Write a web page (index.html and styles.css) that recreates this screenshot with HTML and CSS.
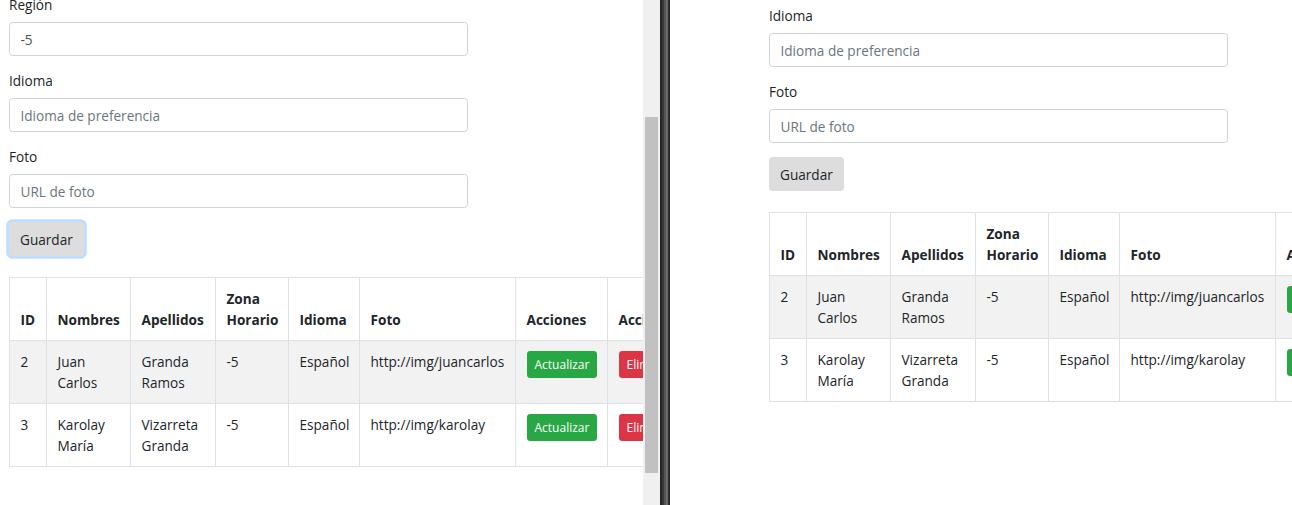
FILE: index.html
```html
<!DOCTYPE html>
<html lang="es">
<head>
<meta charset="utf-8">
<title>Usuarios</title>
<link rel="stylesheet" href="styles.css">
</head>
<body>
<div class="screen">
  <div class="pane pane-left">
    <div class="viewport">
      <div class="page page-left">
        <div class="form-group">
          <label class="label">Región</label>
          <input class="input" type="text" value="-5">
        </div>
        <div class="form-group">
          <label class="label">Idioma</label>
          <input class="input" type="text" placeholder="Idioma de preferencia">
        </div>
        <div class="form-group">
          <label class="label">Foto</label>
          <input class="input" type="text" placeholder="URL de foto">
        </div>
        <button class="btn btn-save is-focused" type="button">Guardar</button>
        <table class="table">
          <colgroup>
            <col class="c-id"><col class="c-nom"><col class="c-ape"><col class="c-zona"><col class="c-idi"><col class="c-foto"><col class="c-acc"><col class="c-acc2">
          </colgroup>
          <thead>
            <tr><th>ID</th><th>Nombres</th><th>Apellidos</th><th>Zona Horario</th><th>Idioma</th><th>Foto</th><th>Acciones</th><th>Acciones</th></tr>
          </thead>
          <tbody>
            <tr class="odd"><td>2</td><td>Juan Carlos</td><td>Granda Ramos</td><td>-5</td><td>Español</td><td class="nowrap">http://img/juancarlos</td><td><button class="btn btn-sm btn-success" type="button">Actualizar</button></td><td><button class="btn btn-sm btn-danger" type="button">Eliminar</button></td></tr>
            <tr><td>3</td><td>Karolay María</td><td>Vizarreta Granda</td><td>-5</td><td>Español</td><td class="nowrap">http://img/karolay</td><td><button class="btn btn-sm btn-success" type="button">Actualizar</button></td><td><button class="btn btn-sm btn-danger" type="button">Eliminar</button></td></tr>
          </tbody>
        </table>
      </div>
    </div>
    <div class="scrollbar"><div class="thumb"></div></div>
  </div>
  <div class="divider"></div>
  <div class="pane pane-right">
    <div class="page page-right">
      <div class="form-group">
        <label class="label">Idioma</label>
        <input class="input" type="text" placeholder="Idioma de preferencia">
      </div>
      <div class="form-group">
        <label class="label">Foto</label>
        <input class="input" type="text" placeholder="URL de foto">
      </div>
      <button class="btn btn-save" type="button">Guardar</button>
      <table class="table">
        <colgroup>
          <col class="c-id"><col class="c-nom"><col class="c-ape"><col class="c-zona"><col class="c-idi"><col class="c-foto"><col class="c-acc"><col class="c-acc2">
        </colgroup>
        <thead>
          <tr><th>ID</th><th>Nombres</th><th>Apellidos</th><th>Zona Horario</th><th>Idioma</th><th>Foto</th><th>Acciones</th><th>Acciones</th></tr>
        </thead>
        <tbody>
          <tr class="odd"><td>2</td><td>Juan Carlos</td><td>Granda Ramos</td><td>-5</td><td>Español</td><td class="nowrap">http://img/juancarlos</td><td><button class="btn btn-sm btn-success" type="button">Actualizar</button></td><td><button class="btn btn-sm btn-danger" type="button">Eliminar</button></td></tr>
          <tr><td>3</td><td>Karolay María</td><td>Vizarreta Granda</td><td>-5</td><td>Español</td><td class="nowrap">http://img/karolay</td><td><button class="btn btn-sm btn-success" type="button">Actualizar</button></td><td><button class="btn btn-sm btn-danger" type="button">Eliminar</button></td></tr>
        </tbody>
      </table>
    </div>
  </div>
</div>
</body>
</html>
```

FILE: styles.css
```css
* { box-sizing: border-box; }

html, body {
  margin: 0;
  padding: 0;
  background: #ffffff;
}

body {
  font-family: "Open Sans", "Noto Sans", sans-serif;
  font-size: 13.6px;
  line-height: 21px;
  color: #212529;
}

.screen {
  display: flex;
  width: 1292px;
  height: 505px;
  overflow: hidden;
}

.pane {
  height: 505px;
  overflow: hidden;
  background: #ffffff;
}

.pane-left {
  display: flex;
  width: 660px;
  flex: none;
}

.viewport {
  width: 643px;
  height: 505px;
  overflow: hidden;
}

.page-left {
  margin-top: -6px;
  padding-left: 9px;
}

.scrollbar {
  width: 17px;
  height: 505px;
  background: #f0f0f0;
  padding: 117px 2px 0 2px;
}

.thumb {
  width: 13px;
  height: 356px;
  background: #c1c1c1;
}

.divider {
  width: 10px;
  flex: none;
  background: linear-gradient(to right,
    #262626 0, #262626 2px,
    #383838 2px, #383838 4px,
    #555555 4px, #555555 6px,
    #6b6b6b 6px, #6b6b6b 8px,
    #2a2a2a 8px, #2a2a2a 10px);
}

.pane-right {
  flex: 1;
  padding-left: 99px;
}

.page-right {
  padding-top: 5px;
}

.form-group {
  margin-bottom: 14px;
}

.label {
  display: block;
  margin-bottom: 7px;
  line-height: 21px;
}

.input {
  display: block;
  width: 459px;
  height: 34px;
  padding: 0 10.5px;
  font: inherit;
  color: #495057;
  background: #ffffff;
  border: 1px solid #ced4da;
  border-radius: 3.5px;
  outline: none;
}

.input::placeholder {
  color: #6c757d;
  opacity: 1;
}

.btn {
  display: inline-block;
  font: inherit;
  color: #212529;
  border: 1px solid transparent;
  border-radius: 3.5px;
  cursor: pointer;
  white-space: nowrap;
}

.btn-save {
  display: block;
  height: 34px;
  padding: 0 10px;
  background: #dddddd;
  margin-bottom: 21px;
}

.btn-save.is-focused {
  box-shadow: 0 0 0 2.8px rgba(0, 123, 255, 0.25);
}

.btn-sm {
  height: 27px;
  padding: 0 7px;
  font-size: 12px;
  line-height: 18px;
  border-radius: 2.8px;
}

.btn-success {
  color: #ffffff;
  background: #28a745;
  border-color: #28a745;
}

.btn-danger {
  color: #ffffff;
  background: #dc3545;
  border-color: #dc3545;
}

.table {
  border-collapse: collapse;
  table-layout: fixed;
  width: 682px;
  color: #212529;
}

.c-id { width: 37px; }
.c-nom { width: 84px; }
.c-ape { width: 85px; }
.c-zona { width: 73px; }
.c-idi { width: 71px; }
.c-foto { width: 156px; }
.c-acc { width: 92px; }
.c-acc2 { width: 84px; }

.table th,
.table td {
  padding: 10px 10.5px;
  border: 1px solid #dee2e6;
  vertical-align: top;
  text-align: left;
  line-height: 21px;
}

.table th {
  vertical-align: bottom;
  font-weight: 700;
}

.table .odd td {
  background: #f2f2f2;
}

.nowrap {
  white-space: nowrap;
}
```
